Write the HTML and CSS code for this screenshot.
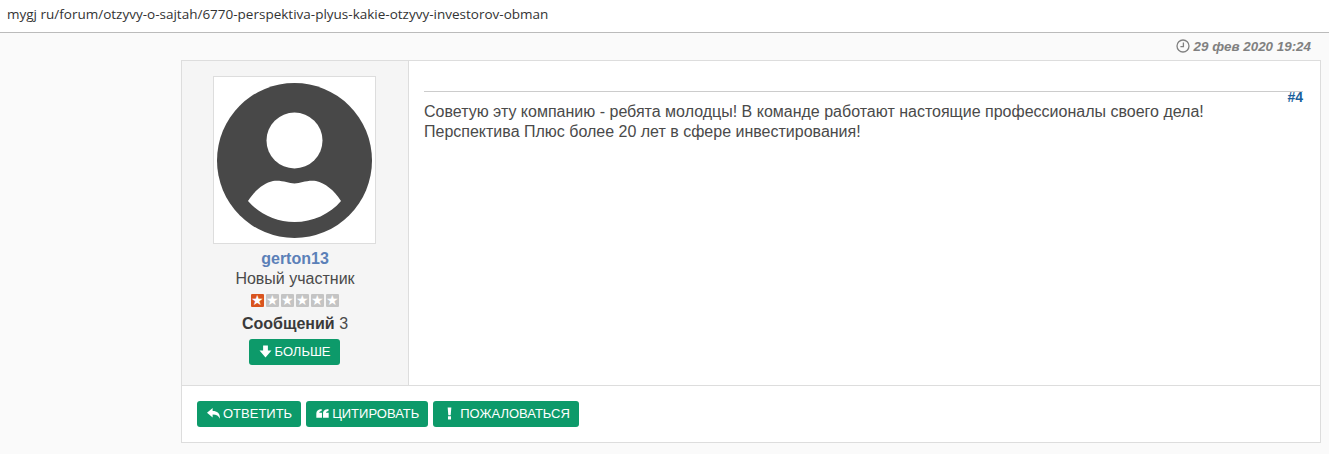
FILE: index.html
```html
<!DOCTYPE html>
<html lang="en">
<head>
  <meta charset="UTF-8">
  <title>Перспектива Плюс</title>
  <link rel="stylesheet" href="styles.css">
</head>
<body>
  <!-- Address strip -->
  <div class="url-bar">mygj ru/forum/otzyvy-o-sajtah/6770-perspektiva-plyus-kakie-otzyvy-investorov-obman</div>

  <div class="page">
    <div class="post-date">
      <svg class="clock" viewBox="0 0 14 14"><circle cx="7" cy="7" r="6"/><path d="M7.4 3.4V7.6H4.4"/></svg>
      <span>29 фев 2020 19:24</span>
    </div>

    <div class="post">
      <div class="post-main">
        <div class="author">
          <div class="avatar">
            <svg viewBox="0 0 155 155">
              <circle cx="77.5" cy="77.5" r="77.5" fill="#484848"/>
              <circle cx="77.5" cy="57.5" r="28" fill="#fff"/>
              <path d="M31 118C38 107 47 100 56 98C66 97 71 100.5 77.5 100.5C84 100.5 89 97 99 98C108 100 117 107 124 118C113 131 96 139 77.5 139C59 139 42 131 31 118Z" fill="#fff"/>
            </svg>
          </div>
          <a class="author-name" href="#">gerton13</a>
          <div class="author-rank">Новый участник</div>
          <div class="stars">
            <span class="star on">★</span><span class="star">★</span><span class="star">★</span><span class="star">★</span><span class="star">★</span><span class="star">★</span>
          </div>
          <div class="author-posts"><b>Сообщений</b> 3</div>
          <a class="btn btn-more" href="#">
            <svg class="ico" viewBox="0 0 12 12"><path d="M3.8 0.5H8.2V5H11.5L6 11.5L0.5 5H3.8Z"/></svg>
            БОЛЬШЕ
          </a>
        </div>

        <div class="content">
          <div class="content-head"><a class="post-num" href="#">#4</a></div>
          <p>Советую эту компанию - ребята молодцы! В команде работают настоящие профессионалы своего дела!<br>Перспектива Плюс более 20 лет в сфере инвестирования!</p>
        </div>
      </div>

      <div class="post-actions">
        <a class="btn" href="#">
          <svg class="ico" viewBox="0 0 12 12"><path d="M5.2 1V3.7C9.5 3.7 12 5.5 12 10.8C10.8 8.4 8.8 7 5.2 7V9.8L0 5.4Z"/></svg>
          ОТВЕТИТЬ
        </a>
        <a class="btn" href="#">
          <svg class="ico" viewBox="0 0 12 12"><path d="M0.3 6C0.3 3.6 1.8 2 5.2 1.8V3.6C3.6 3.8 3 4.5 3 5.3H5.5V10H0.3ZM6.5 6C6.5 3.6 8 2 11.5 1.8V3.6C9.8 3.8 9.2 4.5 9.2 5.3H11.7V10H6.5Z"/></svg>
          ЦИТИРОВАТЬ
        </a>
        <a class="btn" href="#">
          <svg class="ico ico-wide" viewBox="0 0 12 12"><path d="M4.3 0.5H7.7L7.1 7.5H4.9ZM4.6 8.5H7.4V11.5H4.6Z"/></svg>
          ПОЖАЛОВАТЬСЯ
        </a>
      </div>
    </div>
  </div>
</body>
</html>
```

FILE: styles.css
```css
body { margin: 0; background-color: #fff; font-family: "Liberation Sans", Arial, sans-serif; color: #444; }
a { text-decoration: none; }

.url-bar { height: 26px; padding: 6px 0 0 7px; border-bottom: 1px solid #bbb; font-family: "Open Sans", sans-serif; font-size: 13.5px; line-height: 16px; color: #333; background: #fff; }

.page { padding: 0 8px 0 181px; height: 421px; box-sizing: border-box; background-color: #fafafa; }

/* Date line above the post */
.post-date { height: 27px; display: flex; justify-content: flex-end; align-items: center; gap: 4px; padding: 0 10px 1px 0; box-sizing: border-box; font-size: 13.4px; font-weight: bold; font-style: italic; color: #808080; }
.clock { width: 14px; height: 14px; fill: none; stroke: #808080; stroke-width: 1.3; }

.post { background-color: #fff; border: 1px solid #ddd; height: 383px; box-sizing: border-box; }
.post-main { display: flex; height: 324px; border-bottom: 1px solid #ddd; }

/* Author column */
.author { width: 226px; flex: none; background-color: #f5f5f5; border-right: 1px solid #ddd; display: flex; flex-direction: column; align-items: center; padding-top: 15px; font-size: 16px; }
.avatar { width: 163px; height: 168px; box-sizing: border-box; border: 1px solid #ddd; background: #fff; padding: 6px 3px; align-self: flex-start; margin-left: 31px; }
.avatar svg { display: block; width: 155px; height: 155px; }
.author-name { margin-top: 5px; font-size: 16px; line-height: 20px; font-weight: bold; color: #5b80b8; }
.author-rank { line-height: 20px; color: #4a4a4a; }
.stars { display: flex; gap: 2px; margin-top: 5px; }
.star { width: 13px; height: 13px; background-color: #c4c4c4; color: #fff; font-size: 14px; line-height: 13px; text-align: center; border-radius: 1px; }
.star.on { background-color: #d9541e; }
.author-posts { line-height: 20px; margin-top: 7px; margin-bottom: 5px; color: #4a4a4a; }
.author-posts b { color: #3a3a3a; }

/* Green buttons */
.btn { display: inline-flex; align-items: center; gap: 3px; height: 26px; padding: 0 9px 1px 10px; box-sizing: border-box; background-color: #0d9a6a; border-radius: 3px; color: #fff; font-size: 13px; white-space: nowrap; }
.btn-more { width: 91px; margin-right: 2px; }
.ico { width: 13px; height: 13px; fill: #fff; }
.ico-wide { margin-right: 1px; }

/* Message */
.content { flex: 1; padding: 15px 17px 0 15px; font-size: 16px; }
.content-head { height: 16px; border-top: 1px solid #ccc; text-align: right; margin-top: 15px; }
.post-num { font-size: 14px; font-weight: bold; color: #1a5f9c; display: block; line-height: 16px; margin-top: -3px; }
.content p { margin: -6px 0 0; line-height: 20px; color: #4a4a4a; }

.post-actions { display: flex; gap: 5px; padding: 15px 0 0 15px; }
```
